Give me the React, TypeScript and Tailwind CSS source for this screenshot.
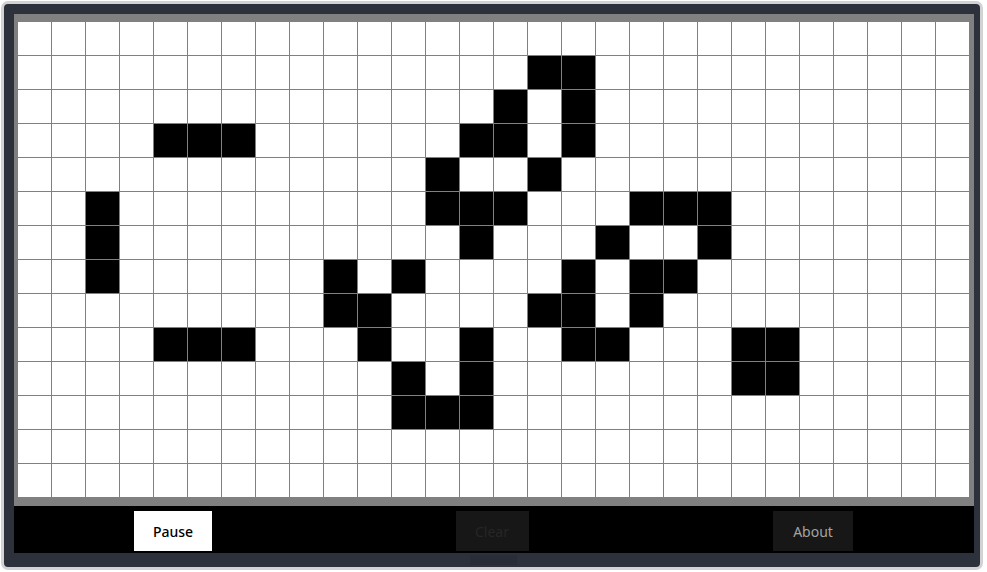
const COLS = 28;
const ROWS = 14;

// live cells as [row, col]
const ALIVE: [number, number][] = [
  [1, 15], [1, 16],
  [2, 14], [2, 16],
  [3, 4], [3, 5], [3, 6], [3, 13], [3, 14], [3, 16],
  [4, 12], [4, 15],
  [5, 2], [5, 12], [5, 13], [5, 14], [5, 18], [5, 19], [5, 20],
  [6, 2], [6, 13], [6, 17], [6, 20],
  [7, 2], [7, 9], [7, 11], [7, 16], [7, 18], [7, 19],
  [8, 9], [8, 10], [8, 15], [8, 16], [8, 18],
  [9, 4], [9, 5], [9, 6], [9, 10], [9, 13], [9, 16], [9, 17], [9, 21], [9, 22],
  [10, 11], [10, 13], [10, 21], [10, 22],
  [11, 11], [11, 12], [11, 13],
];

const alive = new Set(ALIVE.map(([r, c]) => r * COLS + c));

function Board() {
  const cells = [];
  for (let i = 0; i < ROWS * COLS; i++) {
    cells.push(
      <div key={i} className={alive.has(i) ? "bg-black" : "bg-white"} />
    );
  }
  return (
    <div className="w-[960px] h-[492px] bg-[#808080] pt-[8px] pl-[4px]">
      <div className="grid grid-cols-[repeat(28,33px)] grid-rows-[repeat(14,33px)] gap-px">
        {cells}
      </div>
    </div>
  );
}

export default function App() {
  return (
    <div
      className="w-[987px] h-[572px] bg-white pt-px pl-px"
      style={{ fontFamily: '"Noto Sans", "Open Sans", sans-serif' }}
    >
      <div className="relative w-[982px] h-[569px] rounded-[7px] border-[3px] border-[#d2d2d2] bg-[#2d313b] pt-[10px] pl-[10px]">
        <Board />
        <div className="w-[960px] h-[47px] bg-black flex items-start pt-[5px]">
          <div className="flex-1 flex justify-center">
            <button className="-ml-[2px] w-[78px] h-[40px] bg-white text-black text-[14px] font-medium">
              Pause
            </button>
          </div>
          <div className="flex-1 flex justify-center">
            <button
              disabled
              className="-ml-[4px] w-[73px] h-[40px] bg-[#171717] text-[#262626] text-[14px]"
            >
              Clear
            </button>
          </div>
          <div className="flex-1 flex justify-center">
            <button className="-ml-[2px] w-[80px] h-[40px] bg-[#171717] text-[#a3a3a3] text-[14px]">
              About
            </button>
          </div>
        </div>
        <div className="absolute left-[466px] top-[551px] w-[47px] h-[10px] bg-[#292d38]" />
      </div>
    </div>
  );
}
